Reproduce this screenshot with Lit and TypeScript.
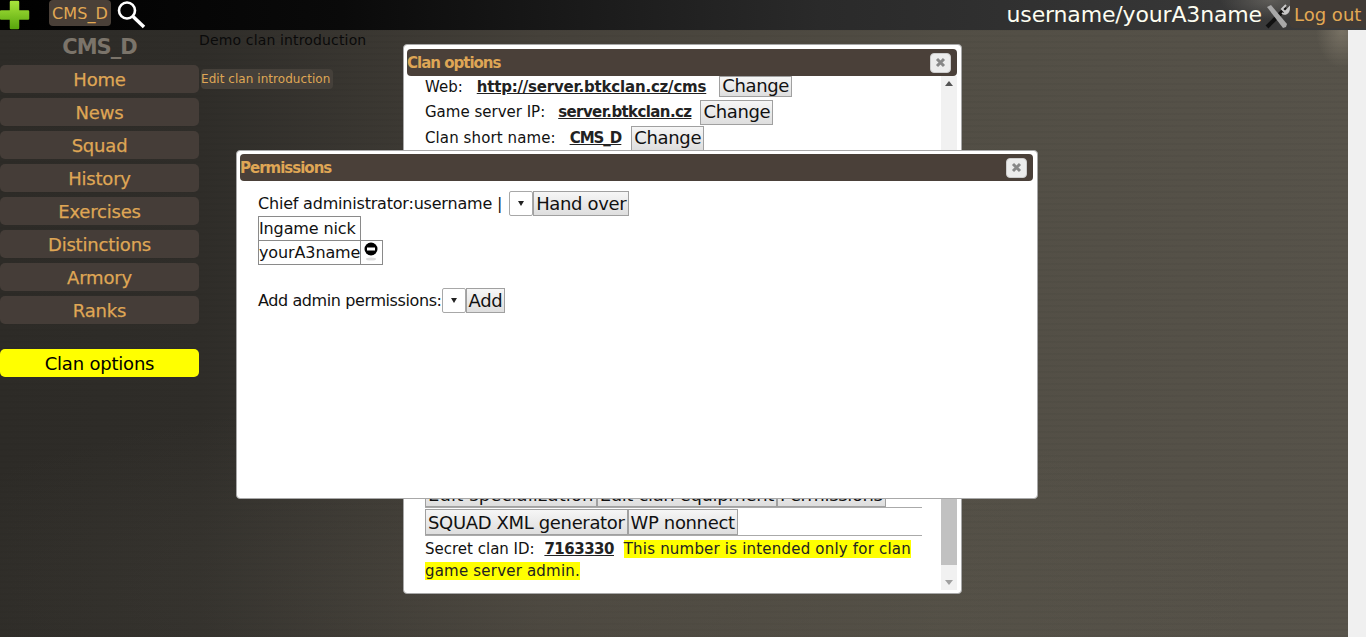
import { LitElement, html, css } from "lit";
import { customElement } from "lit/decorators.js";

const MENU = ["Home", "News", "Squad", "History", "Exercises", "Distinctions", "Armory", "Ranks"];

@customElement("app-root")
export class AppRoot extends LitElement {
  static styles = css`
    :host { display: block; height: 637px; position: relative; overflow: hidden; background: #f0f0f0;
      font-family: "DejaVu Sans", Verdana, sans-serif; font-size: 15px; color: #111; }
    * { box-sizing: border-box; }
    .top { height: 30px; display: flex; align-items: flex-start;
      background:
        radial-gradient(ellipse 50px 20px at 1270px 0, rgba(150,145,135,.4), transparent),
        linear-gradient(90deg, #000 0, #0a0a0a 25%, #2a2a2a 60%, #3c3c3c 100%); }
    .plus { width: 30px; height: 30px; margin-right: 19px; flex: none; }
    .badge { height: 26px; width: 62px; background: #4a4038; border-radius: 4px; color: #e2a954; font-size: 16px;
      display: flex; align-items: center; justify-content: center; letter-spacing: .1px; }
    .search { width: 32px; height: 30px; margin-left: 4px; flex: none; }
    .spacer { flex: 1; }
    .user { color: #fdfdf0; font-size: 22px; line-height: 29px; white-space: nowrap; letter-spacing: -.15px; }
    .tools { width: 26px; height: 28px; margin: 2px 0 0 2px; flex: none; }
    .logout { height: 28px; width: 76px; background: #413b36; color: #e2a954; font-size: 18px; line-height: 29px;
      padding-left: 4px; border-bottom-left-radius: 4px; white-space: nowrap; flex: none; }
    .stage { height: 607px; width: 1348px; display: flex; align-items: flex-start;
      background:
        radial-gradient(ellipse 26px 38px at 1342px 0, rgba(170,160,140,.4), transparent),
        radial-gradient(ellipse 700px 200px at 560px 560px, rgba(110,105,92,.22), transparent),
        repeating-linear-gradient(0deg, rgba(0,0,0,.03) 0 2px, transparent 2px 6px),
        linear-gradient(90deg, #2d2b27 0, #2f2d29 15%, #45413a 40%, #524e45 70%, #57534a 100%); }
    .side { width: 199px; flex: none; display: flex; flex-direction: column; }
    .clan { height: 35px; text-align: center; font-size: 21px; font-weight: bold; color: #7b746a; line-height: 34px; letter-spacing: -1px; }
    .item { height: 28px; margin-bottom: 5px; background: #453d38; border-radius: 5px; color: #dfa655; font-size: 18px;
      text-align: center; line-height: 29px; letter-spacing: -.2px; -webkit-text-stroke: .25px #dfa655; }
    .item.active { background: #ffff00; color: #000; margin-top: 20px; -webkit-text-stroke: 0; }
    .intro { font-size: 14px; line-height: 20px; margin-top: 0; color: #0a0a0a; white-space: nowrap; letter-spacing: .15px; }
    .edit { display: block; margin: 19px 0 0 2px; width: 132px; height: 20px; background: #45403a; border-radius: 4px;
      color: #dfa655; font-size: 12px; line-height: 21px; white-space: nowrap; letter-spacing: .05px; }
    .win { position: absolute; background: #fff; border: 1px solid #a8a8a8; border-radius: 4px; display: flex; flex-direction: column; overflow: hidden; padding: 3px 4px 0 3px; }
    .w1 { left: 403px; top: 44px; width: 559px; height: 550px; padding-top: 4px; }
    .w2 { left: 236px; top: 150px; width: 802px; height: 349px; }
    .bar { height: 27px; flex: none; background: #4a4039; border-radius: 4px; display: flex; align-items: center; justify-content: space-between;
      color: #dfa655; font-weight: bold; font-size: 15px; padding: 0 6px 0 0; letter-spacing: -1px; }
    .x { width: 21px; height: 20px; background: #ececec; border: 1px solid #ccc; border-radius: 4px; display: flex; align-items: center; justify-content: center; }
    .body { flex: 1; min-height: 0; display: flex; position: relative; }
    .col { flex: 1; padding-left: 18px; padding-right: 19px; display: flex; flex-direction: column; justify-content: space-between; }
    .scroll { width: 16px; flex: none; background: #f1f1f1; display: flex; flex-direction: column; align-items: center; margin-bottom: 3px; }
    .thumb { flex: 1; width: 100%; margin: 13px 0 15px; background: linear-gradient(#f1f1f1 0 60px, #c1c1c1 60px); }
    .tri { width: 0; height: 0; border-left: 4px solid transparent; border-right: 4px solid transparent; margin-top: 5px; }
    .tri.up { border-bottom: 5px solid #555; }
    .tri.down { border-top: 5px solid #a0a0a0; margin: 0 0 5px; }
    .row { display: flex; align-items: center; height: 26px; white-space: nowrap; font-size: 15px; }
    .row.first { height: 23px; padding-bottom: 2px; }
    .row b { font-weight: bold; text-decoration: underline; color: #222; font-size: 15px; }
    .l1 { margin: 0 13px 0 14px; letter-spacing: -.2px; }
    .l2 { margin: 0 9px 0 13px; letter-spacing: -.6px; }
    .l3 { margin: 0 10px 0 14px; letter-spacing: -1px; }
    .wide { letter-spacing: .1px; }
    .btn { height: 25px; padding: 0 2px; border: 1px solid #a0a0a0; background: linear-gradient(#f6f6f6, #dedede);
      font-size: 18px; line-height: 23px; color: #111; white-space: nowrap; font-family: inherit; display: inline-block; flex: none; letter-spacing: -.35px; }
    .row .btn { line-height: 21px; }
    .row.first .btn { height: 21px; line-height: 17px; }
    .btnrow { display: flex; height: 27px; border-bottom: 1px solid #aaa; }
    .btnrow.tight { height: 28px; padding-top: 1px; }
    .btnrow .btn { height: 100%; line-height: 25px; }
    .btnrow .btn.spread { letter-spacing: .12px; }
    .secret { font-size: 15px; line-height: 22px; margin-top: 2px; padding-bottom: 11px; width: 497px; }
    .secret b { text-decoration: underline; margin: 0 5px 0 5px; color: #222; letter-spacing: -.5px; }
    mark { background: #ffff00; color: #222; letter-spacing: .2px; }
    .perm { padding: 10px 0 0 18px; font-size: 16px; }
    .prow { display: flex; align-items: center; height: 25px; white-space: nowrap; letter-spacing: -.2px; }
    .prow.add { letter-spacing: -.4px; margin-top: 23px; }
    .sel { width: 24px; height: 25px; border: 1px solid #a8a8a8; border-radius: 2px; background: #fff; display: flex; align-items: center; justify-content: center; flex: none; }
    .sel.gap { margin-left: 7px; }
    .sel i { width: 0; height: 0; border-left: 3px solid transparent; border-right: 3px solid transparent; border-top: 5px solid #222; }
    table { border-collapse: collapse; font-size: 16px; letter-spacing: -.12px; }
    td { border: 1px solid #8a8a8a; padding: 0; height: 24px; line-height: 22px; vertical-align: middle; }
    td.ico { width: 22px; vertical-align: top; text-align: center; }
    td svg { display: block; margin: 1px auto 0 3px; }
  `;

  render() {
    return html`
      <div class="top">
        <svg class="plus" viewBox="0 0 30 30"><defs><linearGradient id="g" x1="0" y1="0" x2="0" y2="1"><stop offset="0" stop-color="#a6e23a"/><stop offset="1" stop-color="#5aa80e"/></linearGradient></defs><path d="M11 2h7v9.500h10v7H18V28h-7V18.500H1v-7h10z" fill="url(#g)" stroke="url(#g)" stroke-width="2.500" stroke-linejoin="round"/></svg>
        <div class="badge">CMS_D</div>
        <svg class="search" viewBox="0 0 32 30" fill="none" stroke="#fff"><circle cx="12" cy="10.500" r="8" stroke-width="2.600"/><path d="M18 16.500l11 10.500" stroke-width="3.500"/></svg>
        <div class="spacer"></div>
        <div class="user">username/yourA3name</div>
        <svg class="tools" viewBox="0 0 26 28" fill="none"><path d="M3 25L22 6" stroke="#111" stroke-width="4"/><path d="M3 5l4-2 16 19-1 3-3 1z" fill="#a8a8a8"/><path d="M22 3l-4 4 3 3 4-4c0 5-4 7-7 5" stroke="#c8c8c8" stroke-width="2"/></svg>
        <div class="logout">Log out</div>
      </div>
      <div class="stage">
        <nav class="side">
          <div class="clan">CMS_D</div>
          ${MENU.map((m) => html`<div class="item">${m}</div>`)}
          <div class="item active">Clan options</div>
        </nav>
        <div class="intro">
          Demo clan introduction
          <span class="edit">Edit clan introduction</span>
        </div>
      </div>

      <section class="win w1">
        <div class="bar">Clan options ${this.closeBtn()}</div>
        <div class="body">
          <div class="col">
            <div>
              <div class="row first">Web: <b class="l1">http://server.btkclan.cz/cms</b><span class="btn">Change</span></div>
              <div class="row">Game server IP: <b class="l2">server.btkclan.cz</b><span class="btn">Change</span></div>
              <div class="row"><span class="wide">Clan short name:</span> <b class="l3">CMS_D</b><span class="btn">Change</span></div>
            </div>
            <div>
              <div class="btnrow"><span class="btn spread">Edit specialization</span><span class="btn">Edit clan equipment</span><span class="btn">Permissions</span></div>
              <div class="btnrow tight"><span class="btn">SQUAD XML generator</span><span class="btn">WP nonnect</span></div>
              <div class="secret">Secret clan ID: <b>7163330</b> <mark>This number is intended only for clan game server admin.</mark></div>
            </div>
          </div>
          <div class="scroll"><div class="tri up"></div><div class="thumb"></div><div class="tri down"></div></div>
        </div>
      </section>

      <section class="win w2">
        <div class="bar">Permissions ${this.closeBtn()}</div>
        <div class="perm">
          <div class="prow">Chief administrator:username |<span class="sel gap"><i></i></span><span class="btn">Hand over</span></div>
          <table>
            <tr><td>Ingame nick</td></tr>
            <tr><td>yourA3name</td><td class="ico"><svg width="14" height="20" viewBox="0 0 14 20"><circle cx="7" cy="7" r="6.500" fill="#000"/><rect x="3" y="5.500" width="8" height="3" fill="#fff"/><ellipse cx="7" cy="17" rx="5" ry="1.500" fill="#ddd"/></svg></td></tr>
          </table>
          <div class="prow add">Add admin permissions:<span class="sel"><i></i></span><span class="btn">Add</span></div>
        </div>
      </section>
    `;
  }

  closeBtn() {
    return html`<span class="x"><svg width="11" height="11" viewBox="0 0 11 11"><path d="M2 2l7 7M9 2l-7 7" stroke="#888" stroke-width="3"/></svg></span>`;
  }
}
